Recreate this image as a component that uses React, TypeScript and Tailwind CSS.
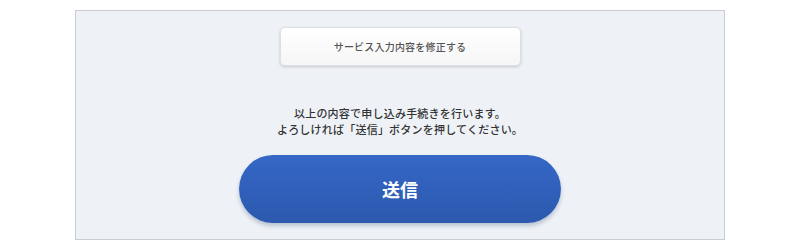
import React from 'react';

const jp = '"Noto Sans CJK JP", "Noto Sans", sans-serif';

export default function App() {
  return (
    <div className="w-[800px] h-[251px] bg-white pt-[10px] pl-[75px]" style={{ fontFamily: jp }}>
      {/* Confirm panel */}
      <div className="w-[650px] h-[230px] border border-[#c9ccd1] bg-[#eef2f7] flex flex-col items-center pt-[16px]">
        <button className="w-[241px] h-[39px] rounded-[5px] border border-[#dcdfe3] bg-gradient-to-b from-white to-[#f6f6f6] shadow-[0_1px_3px_rgba(0,0,0,0.18)] text-[10px] font-medium text-[#555] tracking-[0.02em]">
          サービス入力内容を修正する
        </button>

        <div className="mt-[39px] text-center text-[11px] leading-[16px] font-medium text-[#333] tracking-[0.02em]">
          <p>以上の内容で申し込み手続きを行います。</p>
          <p>よろしければ「送信」ボタンを押してください。</p>
        </div>

        <button className="mt-[18px] w-[322px] h-[68px] rounded-full bg-gradient-to-b from-[#3567c7] to-[#2c59ae] shadow-[0_3px_4px_rgba(60,80,120,0.3)] text-white text-[18px] font-bold">
          送信
        </button>
      </div>
    </div>
  );
}
